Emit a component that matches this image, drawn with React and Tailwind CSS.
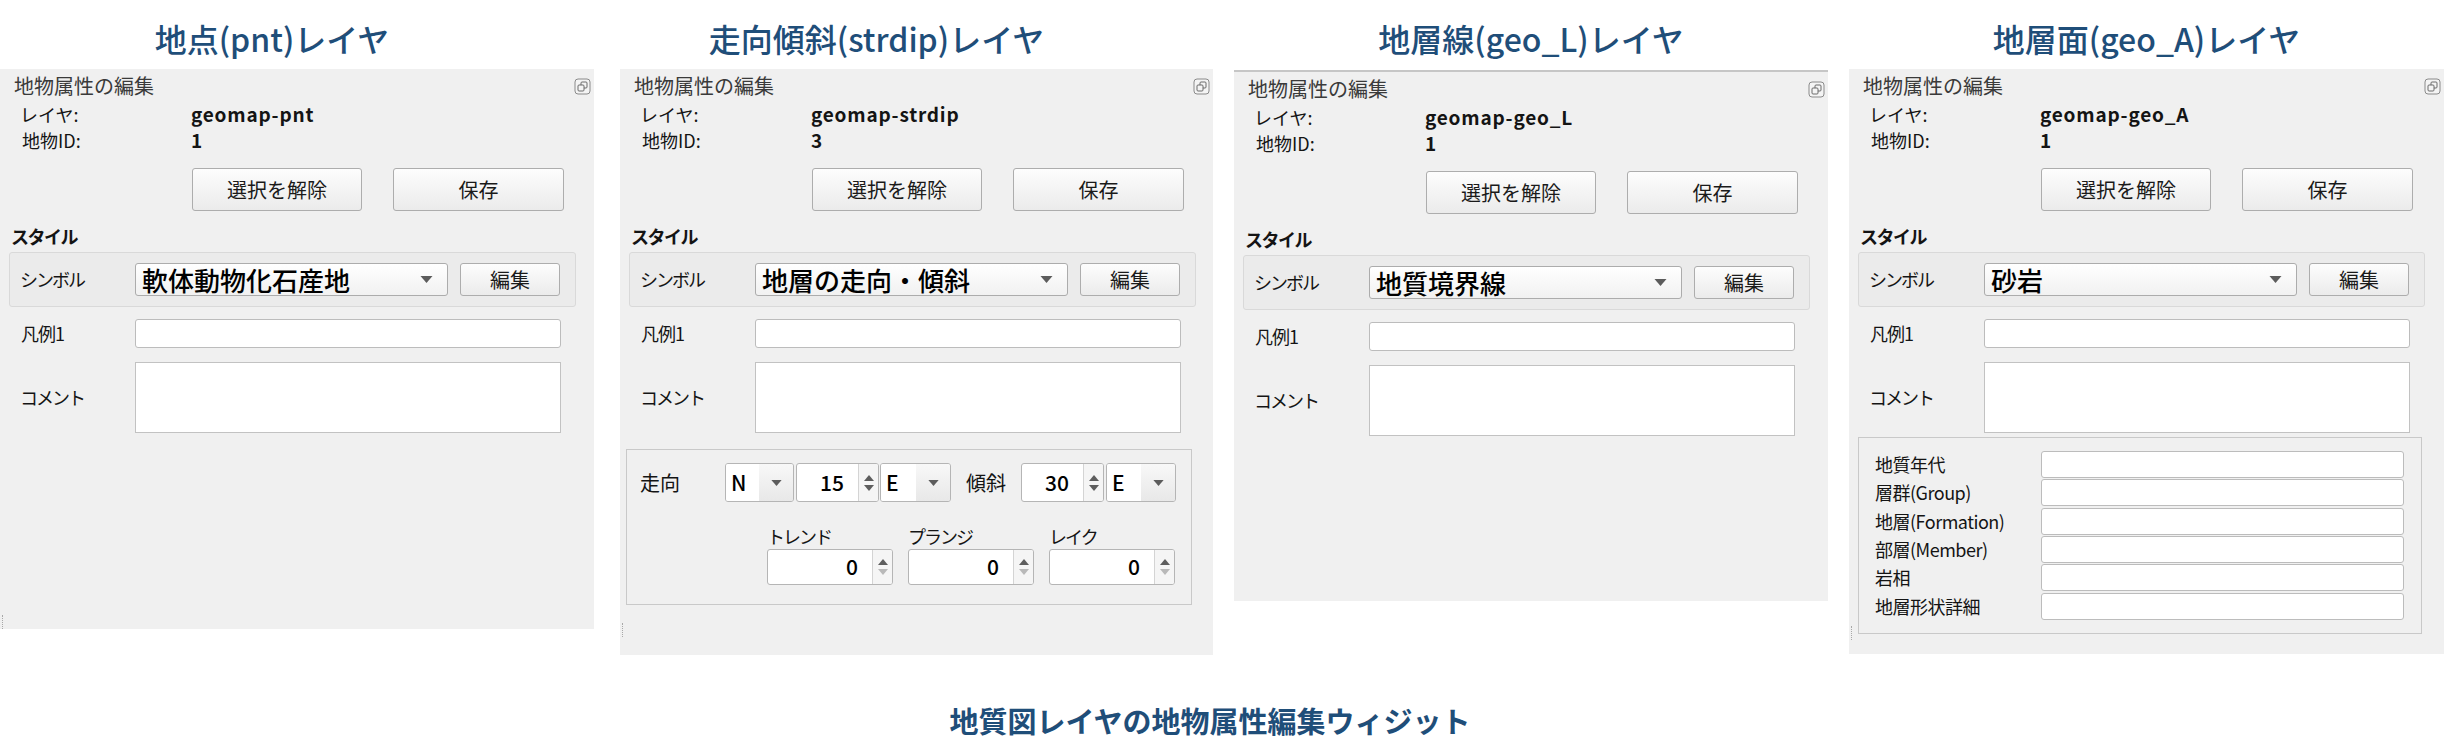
import React from 'react';

// QGIS-style "地物属性の編集" dock widget, four variants side by side

const FloatIcon = () => (
  <svg width="17" height="17" viewBox="0 0 17 17">
    <rect x="1" y="1" width="15" height="15" rx="3" fill="#f4f4f4" stroke="#8a8a8a" />
    <rect x="7" y="4" width="6" height="6" rx="1" fill="none" stroke="#6a6a6a" />
    <rect x="4" y="7" width="6" height="6" rx="1" fill="#f4f4f4" stroke="#6a6a6a" />
  </svg>
);

const DownArrow = ({ w = 13 }) => (
  <svg width={w} height={Math.round(w * 0.55)} viewBox="0 0 12 7">
    <path d="M0 0 L12 0 L6 7 Z" fill="#5c5c5c" />
  </svg>
);

const Tri = ({ up, color }) => (
  <svg width="10" height="6" viewBox="0 0 10 6">
    <path d={up ? 'M0 6 L10 6 L5 0 Z' : 'M0 0 L10 0 L5 6 Z'} fill={color} />
  </svg>
);

const Btn = ({ children, className = '' }) => (
  <div
    className={`flex items-center justify-center rounded-[3px] border border-[#adadad] bg-linear-to-b from-[#fdfdfd] to-[#ebebeb] text-[20px] text-[#1a1a1a] ${className}`}
  >
    {children}
  </div>
);

const SmallCombo = ({ v, className = '' }) => (
  <div className={`flex h-[39px] overflow-hidden rounded-[3px] border border-[#b5b5b5] ${className}`}>
    <div className="flex flex-1 items-center bg-white pl-[5px] text-[21px] font-medium text-black">{v}</div>
    <div className="flex w-[34px] items-center justify-center bg-linear-to-b from-[#f8f8f8] to-[#e8e8e8]">
      <DownArrow w={11} />
    </div>
  </div>
);

const Spin = ({ v, className = '', dim }) => (
  <div className={`flex overflow-hidden rounded-[3px] border border-[#b5b5b5] bg-white ${className}`}>
    <div className="flex flex-1 items-center justify-end pr-[14px] text-[21px] font-medium text-black">{v}</div>
    <div className="flex w-[20px] flex-col items-center justify-center gap-[4px] border-l border-[#d4d4d4] bg-[#f5f5f5]">
      <Tri up color="#5e5e5e" />
      <Tri color={dim ? '#b9b9b9' : '#5e5e5e'} />
    </div>
  </div>
);

const StrDipBox = () => (
  <div className="ml-[6px] mt-[16px] flex h-[156px] w-[566px] flex-col border border-[#c9c9c9] pl-[13px] pt-[13px]">
    <div className="flex h-[39px] items-center">
      <span className="w-[85px] text-[20px]">走向</span>
      <SmallCombo v="N" className="w-[69px]" />
      <Spin v="15" className="ml-[2px] h-[39px] w-[83px]" />
      <SmallCombo v="E" className="ml-[1px] w-[71px]" />
      <span className="ml-[15px] w-[55px] text-[20px]">傾斜</span>
      <Spin v="30" className="h-[39px] w-[83px]" />
      <SmallCombo v="E" className="ml-[2px] w-[70px]" />
    </div>
    <div className="mt-[23px] flex gap-[15px] pl-[127px]">
      {['トレンド', 'プランジ', 'レイク'].map((l) => (
        <div key={l} className="flex w-[126px] flex-col">
          <span className="h-[22px] text-[18px] leading-[22px] tracking-[-2px]">{l}</span>
          <Spin v="0" dim className="mt-[2px] h-[36px] w-[126px]" />
        </div>
      ))}
    </div>
  </div>
);

const GeoABox = () => (
  <div className="ml-[9px] mt-[4px] flex h-[197px] w-[564px] flex-col border border-[#c9c9c9] pl-[16px] pt-[13px]">
    {['地質年代', '層群(Group)', '地層(Formation)', '部層(Member)', '岩相', '地層形状詳細'].map((l) => (
      <div key={l} className="flex h-[28.33px] items-start">
        <span className="w-[166px] text-[18px] leading-[27px] tracking-[-0.5px]">{l}</span>
        <div className="h-[27px] w-[363px] rounded-[3px] border border-[#bcbcbc] bg-white" />
      </div>
    ))}
  </div>
);

const Panel = ({ layer, id, symbol, extra, className = '', grip = '' }) => (
  <div className={`relative flex flex-col bg-[#f0f0f0] text-[#141414] ${className}`}>
    <div className="flex h-[34px] items-center justify-between pl-[14px] pr-[3px]">
      <span className="text-[20px] text-[#3a3a3a]">地物属性の編集</span>
      <FloatIcon />
    </div>
    <div className="flex h-[22px] items-center text-[18px]">
      <span className="w-[191px] pl-[20px]">レイヤ:</span>
      <span className="text-[19px] font-bold tracking-[0.8px]">{layer}</span>
    </div>
    <div className="flex h-[30px] items-center text-[18px]">
      <span className="w-[191px] pl-[22px]">地物ID:</span>
      <span className="text-[19px] font-bold">{id}</span>
    </div>
    <div className="mt-[13px] flex h-[43px] gap-[31px] pl-[192px]">
      <Btn className="w-[170px]">選択を解除</Btn>
      <Btn className="w-[171px]">保存</Btn>
    </div>
    <div className="mt-[13px] flex h-[24px] items-center pl-[11px] text-[18px] font-bold tracking-[-1.5px]">スタイル</div>
    <div className="ml-[9px] mt-[4px] flex h-[55px] w-[567px] items-center rounded-[3px] border border-[#d9d9d9] bg-[#ebebeb] pl-[10px]">
      <span className="w-[115px] text-[18px] tracking-[-2px]">シンボル</span>
      <div className="flex h-[33px] w-[313px] items-center justify-between rounded-[3px] border border-[#acacac] bg-linear-to-b from-[#ffffff] to-[#f1f1f1] pl-[6px] pr-[14px]">
        <span className="text-[26px] font-medium leading-none text-black">{symbol}</span>
        <DownArrow />
      </div>
      <Btn className="ml-[12px] h-[33px] w-[100px]">編集</Btn>
    </div>
    <div className="mt-[12px] flex items-center">
      <span className="w-[135px] pl-[21px] text-[18px] tracking-[-1px]">凡例1</span>
      <div className="h-[29px] w-[426px] rounded-[3px] border border-[#bcbcbc] bg-white" />
    </div>
    <div className="mt-[14px] flex items-center">
      <span className="w-[135px] pl-[20px] text-[18px] tracking-[-2px]">コメント</span>
      <div className="h-[71px] w-[426px] border border-[#c2c2c2] bg-white" />
    </div>
    {extra}
    <div className={`absolute left-[2px] h-[14px] border-l border-dotted border-[#a8a8a8] ${grip}`} />
  </div>
);

const Title = ({ children, className = '' }) => (
  <div className={`flex h-[69px] items-center justify-center pt-[7px] text-[32px] font-medium text-[#1f4e79] ${className}`}>
    {children}
  </div>
);

export default function App() {
  return (
    <div className="h-[754px] w-[2444px] overflow-hidden bg-white font-['Noto_Sans_CJK_JP','Noto_Sans',sans-serif]">
      <div className="flex h-[655px] items-start">
        <div className="flex w-[594px] flex-col">
          <Title className="pr-[50px]">地点(pnt)レイヤ</Title>
          <Panel layer="geomap-pnt" id="1" symbol="軟体動物化石産地" className="h-[560px]" grip="bottom-[0px]" />
        </div>
        <div className="ml-[26px] flex w-[593px] flex-col">
          <Title className="pr-[80px]">走向傾斜(strdip)レイヤ</Title>
          <Panel
            layer="geomap-strdip"
            id="3"
            symbol="地層の走向・傾斜"
            extra={<StrDipBox />}
            className="h-[586px]"
            grip="bottom-[18px]"
          />
        </div>
        <div className="ml-[21px] flex w-[594px] flex-col">
          <Title>地層線(geo_L)レイヤ</Title>
          <Panel
            layer="geomap-geo_L"
            id="1"
            symbol="地質境界線"
            className="mt-[1px] h-[531px] border-t-2 border-[#c6c6c6]"
            grip="hidden"
          />
        </div>
        <div className="ml-[21px] flex w-[595px] flex-col">
          <Title>地層面(geo_A)レイヤ</Title>
          <Panel
            layer="geomap-geo_A"
            id="1"
            symbol="砂岩"
            extra={<GeoABox />}
            className="h-[585px]"
            grip="bottom-[14px]"
          />
        </div>
      </div>
      <div className="mt-[44px] h-[42px] pr-[24px] text-center text-[29px] font-bold leading-[42px] text-[#1f4e79]">
        地質図レイヤの地物属性編集ウィジット
      </div>
    </div>
  );
}
